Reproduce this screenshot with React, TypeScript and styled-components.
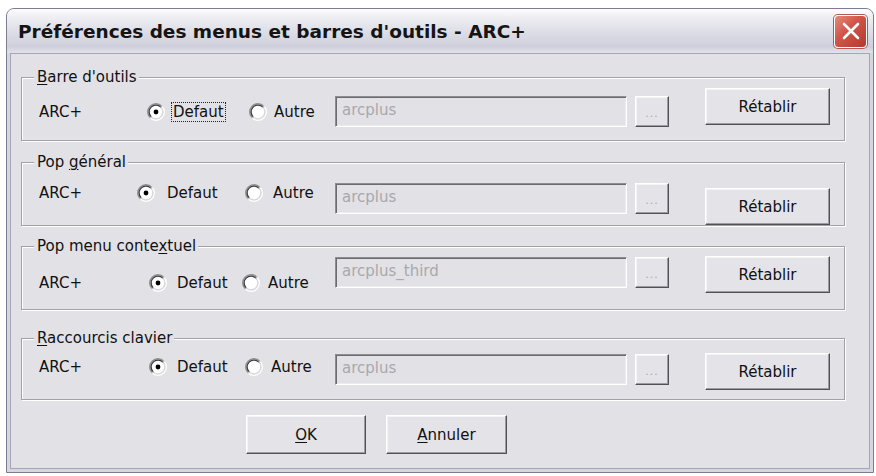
import React from "react";
import styled, { createGlobalStyle } from "styled-components";

const GlobalStyle = createGlobalStyle`
  body {
    margin: 0;
    background: #ffffff;
    font-family: "DejaVu Sans", "Liberation Sans", sans-serif;
  }
`;

const Window = styled.div`
  margin: 8px 0 0 6px;
  width: 868px;
  height: 465px;
  box-sizing: border-box;
  border: 1px solid #7d7d92;
  border-radius: 8px 8px 0 0;
  background: #d6d6e0;
  display: flex;
  flex-direction: column;
`;

const TitleBar = styled.div`
  height: 44px;
  display: flex;
  align-items: center;
  justify-content: space-between;
  padding: 0 6px 0 11px;
  border-radius: 7px 7px 0 0;
  background: linear-gradient(
    #fdfdfe 0%,
    #eeeef3 18%,
    #dcdce6 55%,
    #cfcfdb 85%,
    #e2e2ea 100%
  );
  color: #141414;
  font-weight: bold;
  font-size: 18.5px;
`;

const CloseButton = styled.div`
  width: 33px;
  height: 33px;
  box-sizing: border-box;
  border: 1px solid #ffffff;
  border-radius: 4px;
  background: linear-gradient(135deg, #e58a7c 0%, #d2574a 40%, #b23a2e 100%);
  box-shadow: 0 0 0 1px #b25a52;
  display: flex;
  align-items: center;
  justify-content: center;
`;

const Client = styled.div`
  flex: 1;
  margin: 0 3px 3px 3px;
  border: 1px solid #a5a5b7;
  background: #e2e1e6;
  padding: 0 24px 0 10px;
  display: flex;
  flex-direction: column;
`;

const GroupBox = styled.div<{ $gap: number; $height: number }>`
  position: relative;
  margin-top: ${(p) => p.$gap}px;
  height: ${(p) => p.$height}px;
  box-sizing: border-box;
  border: 1px solid #a2a1a6;
  box-shadow: inset 1px 1px #ffffff, 1px 1px #ffffff;
`;

const Legend = styled.span`
  position: absolute;
  left: 12px;
  top: -10px;
  padding: 0 2px 0 3px;
  background: #e2e1e6;
  font-size: 15px;
  color: #111;
  line-height: 18px;
`;

const Key = styled.u`
  text-decoration-thickness: 1px;
  text-underline-offset: 2px;
`;

const Row = styled.div`
  display: grid;
  grid-template-columns: 313px 292px 34px 125px;
  align-items: start;
`;

const Choices = styled.div<{ $top: number }>`
  margin-top: ${(p) => p.$top}px;
  padding-left: 17px;
  display: flex;
  align-items: center;
  font-size: 15px;
  color: #111;
  line-height: 18px;
`;

const Product = styled.span<{ $width: number }>`
  width: ${(p) => p.$width}px;
  flex-shrink: 0;
`;

const Option = styled.span<{ $width?: number }>`
  display: flex;
  align-items: center;
  flex-shrink: 0;
  ${(p) => (p.$width ? `width: ${p.$width}px;` : "")}
`;

const RadioLabel = styled.span<{ $focus?: boolean; $gap: number }>`
  margin-left: ${(p) => p.$gap}px;
  padding: 0 1px;
  border: 1px dotted ${(p) => (p.$focus ? "#222" : "transparent")};
`;

const TextField = styled.div<{ $top: number }>`
  margin-top: ${(p) => p.$top}px;
  height: 31px;
  box-sizing: border-box;
  border: 1px solid;
  border-color: #8d8d92 #ffffff #ffffff #8d8d92;
  box-shadow: inset 1px 1px #6c6c70, inset -1px -1px #ececef;
  padding: 4px 6px;
  font-size: 15px;
  color: #a9a8ad;
`;

const RaisedButton = styled.div<{ $top?: number; $left?: number; $width: number; $height: number }>`
  margin-top: ${(p) => p.$top ?? 0}px;
  margin-left: ${(p) => p.$left ?? 0}px;
  width: ${(p) => p.$width}px;
  height: ${(p) => p.$height}px;
  box-sizing: border-box;
  flex-shrink: 0;
  border: 1px solid;
  border-color: #ffffff #505055 #505055 #ffffff;
  box-shadow: inset -1px -1px #9d9ca2, inset 1px 1px #f4f4f6;
  background: #e4e3e8;
  display: flex;
  align-items: center;
  justify-content: center;
  font-size: 15px;
  color: #111;
`;

const Dots = styled.span`
  color: #a9a8ad;
  font-size: 11px;
  letter-spacing: 1px;
  margin-top: 4px;
`;

const Footer = styled.div`
  display: flex;
  gap: 20px;
  margin: 15px 0 0 225px;
`;

const Radio: React.FC<{ checked: boolean }> = ({ checked }) => (
  <svg width="18" height="18" viewBox="0 0 18 18">
    <defs>
      <linearGradient id="rOuter" x1="0" y1="0" x2="1" y2="1">
        <stop offset="0.45" stopColor="#8e8e92" />
        <stop offset="0.55" stopColor="#ffffff" />
      </linearGradient>
      <linearGradient id="rInner" x1="0" y1="0" x2="1" y2="1">
        <stop offset="0.45" stopColor="#404044" />
        <stop offset="0.55" stopColor="#d8d7dc" />
      </linearGradient>
    </defs>
    <circle cx="9" cy="9" r="8.3" fill="none" stroke="url(#rOuter)" strokeWidth="1.4" />
    <circle cx="9" cy="9" r="6.9" fill="#ffffff" stroke="url(#rInner)" strokeWidth="1.4" />
    {checked && <circle cx="9" cy="9" r="2.4" fill="#000" />}
  </svg>
);

type Group = {
  title: React.ReactNode;
  path: string;
  gap: number;
  height: number;
  text: number;
  field: number;
  button: number;
  radio1: number;
  radio2: number;
  label1: number;
  label2: number;
  focus?: boolean;
};

const groups: Group[] = [
  {
    title: (
      <>
        <Key>B</Key>arre d'outils
      </>
    ),
    path: "arcplus",
    gap: 23,
    height: 64,
    text: 24,
    field: 18,
    button: 10,
    radio1: 148,
    radio2: 250,
    label1: 6,
    label2: 5,
    focus: true,
  },
  {
    title: (
      <>
        Pop <Key>g</Key>énéral
      </>
    ),
    path: "arcplus",
    gap: 21,
    height: 64,
    text: 20,
    field: 20,
    button: 25,
    radio1: 138,
    radio2: 246,
    label1: 10,
    label2: 8,
  },
  {
    title: (
      <>
        Pop menu conte<Key>x</Key>tuel
      </>
    ),
    path: "arcplus_third",
    gap: 20,
    height: 64,
    text: 26,
    field: 10,
    button: 9,
    radio1: 150,
    radio2: 243,
    label1: 8,
    label2: 6,
  },
  {
    title: (
      <>
        <Key>R</Key>accourcis clavier
      </>
    ),
    path: "arcplus",
    gap: 28,
    height: 62,
    text: 18,
    field: 15,
    button: 14,
    radio1: 150,
    radio2: 246,
    label1: 8,
    label2: 6,
  },
];

const App: React.FC = () => {
  return (
    <>
      <GlobalStyle />
      <Window>
        <TitleBar>
          <span>Préférences des menus et barres d'outils - ARC+</span>
          <CloseButton>
            <svg width="20" height="20" viewBox="0 0 20 20">
              <path d="M3 3 L17 17 M17 3 L3 17" stroke="#ffffff" strokeWidth="2.6" strokeLinecap="round" />
            </svg>
          </CloseButton>
        </TitleBar>
        <Client>
          {groups.map((g, i) => (
            <GroupBox key={i} $gap={g.gap} $height={g.height}>
              <Legend>{g.title}</Legend>
              <Row>
                <Choices $top={g.text}>
                  <Product $width={g.radio1 - 40}>ARC+</Product>
                  <Option $width={g.radio2 - g.radio1}>
                    <Radio checked />
                    <RadioLabel $gap={g.label1} $focus={g.focus}>
                      Defaut
                    </RadioLabel>
                  </Option>
                  <Option>
                    <Radio checked={false} />
                    <RadioLabel $gap={g.label2}>Autre</RadioLabel>
                  </Option>
                </Choices>
                <TextField $top={g.field}>{g.path}</TextField>
                <RaisedButton $top={g.field} $left={8} $width={34} $height={31}>
                  <Dots>...</Dots>
                </RaisedButton>
                <RaisedButton $top={g.button} $left={44} $width={125} $height={37}>
                  Rétablir
                </RaisedButton>
              </Row>
            </GroupBox>
          ))}
          <Footer>
            <RaisedButton $width={120} $height={39}>
              <Key>O</Key>K
            </RaisedButton>
            <RaisedButton $width={121} $height={39}>
              <Key>A</Key>nnuler
            </RaisedButton>
          </Footer>
        </Client>
      </Window>
    </>
  );
};

export default App;
